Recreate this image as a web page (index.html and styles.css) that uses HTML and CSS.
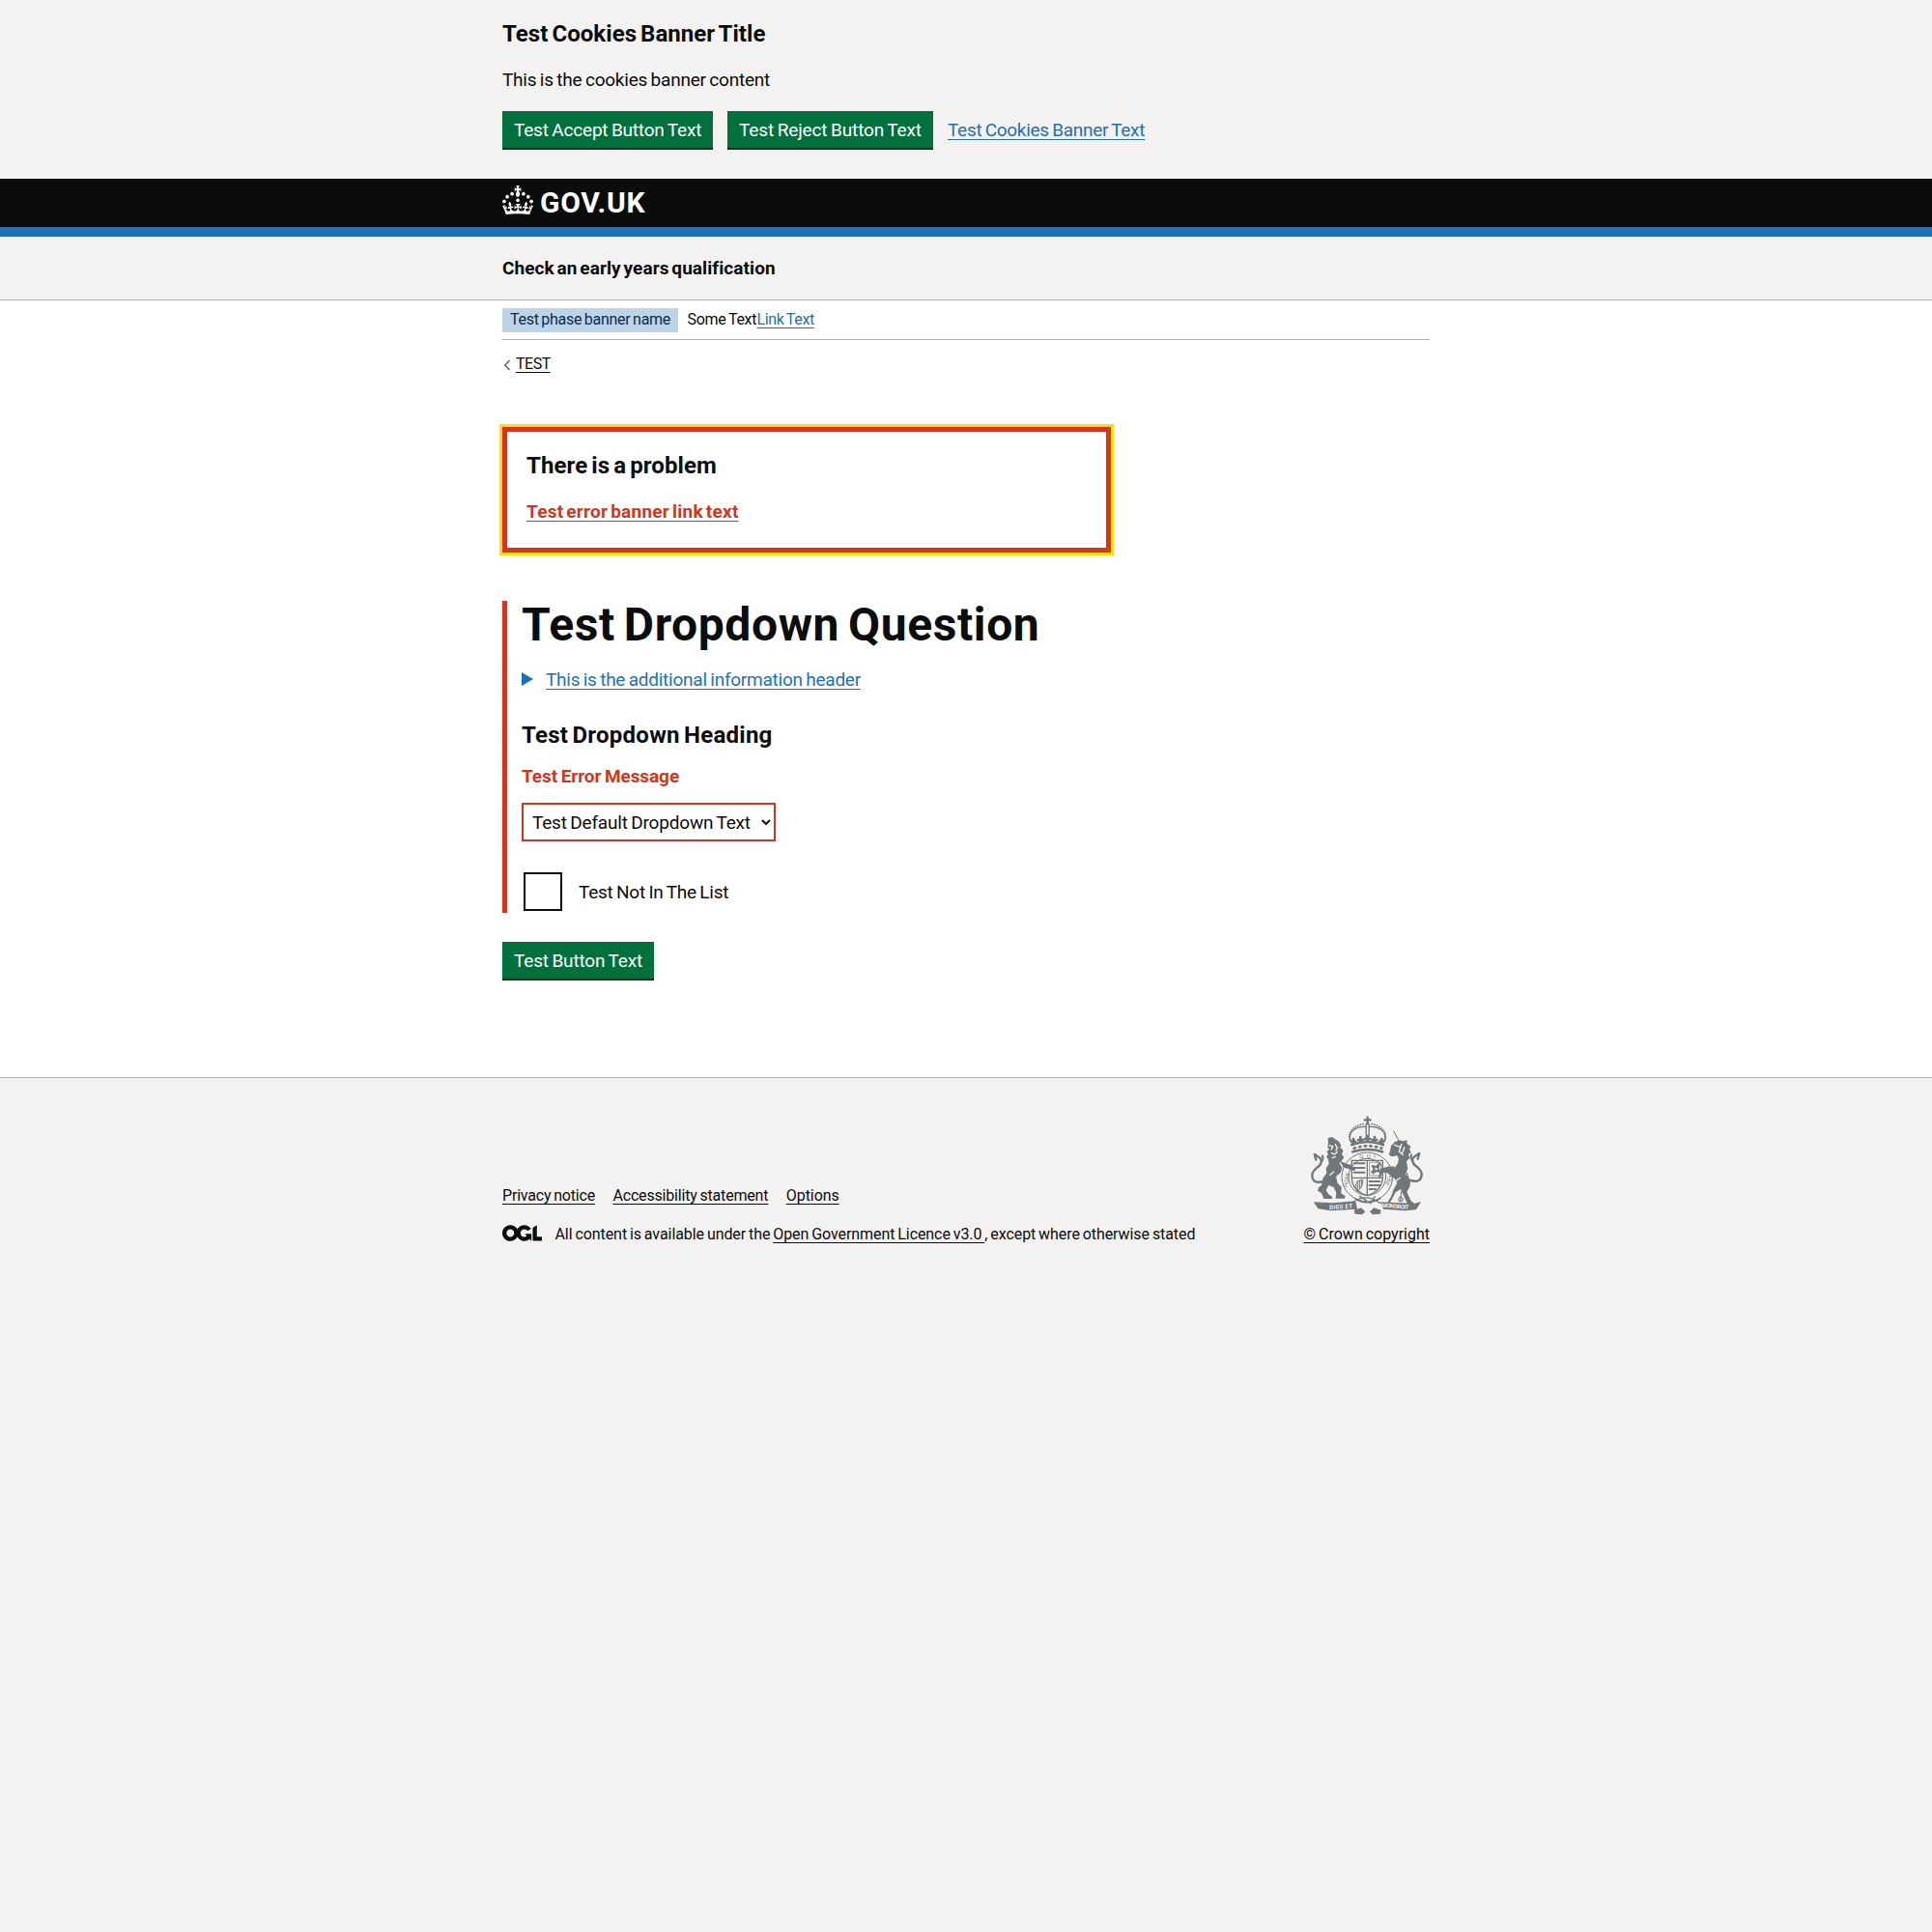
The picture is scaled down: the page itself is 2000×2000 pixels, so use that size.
FILE: index.html
```html
<!DOCTYPE html>
<html lang="en">
<head>
<meta charset="utf-8">
<title>Check an early years qualification</title>
<link rel="stylesheet" href="styles.css">
</head>
<body>
<section class="cookies">
  <div class="container">
    <h2 class="heading cookies-title">Test Cookies Banner Title</h2>
    <p class="cookies-text">This is the cookies banner content</p>
    <div class="button-group">
      <button class="button accept">Test Accept Button Text</button>
      <button class="button reject">Test Reject Button Text</button>
      <a class="link cookies-link" href="#">Test Cookies Banner Text</a>
    </div>
  </div>
</section>

<header class="header">
  <div class="container logo">
    <svg class="crown" viewBox="0 0 32 30" aria-hidden="true"><path fill="currentColor" d="M22.6 10.4c-1 .4-2-.1-2.4-1-.4-.9.1-2 1-2.4.9-.4 2 .1 2.4 1s-.1 2-1 2.4m-5.9 6.7c-.9.4-2-.1-2.4-1-.4-.9.1-2 1-2.4.9-.4 2 .1 2.4 1s-.1 2-1 2.4m10.8-3.7c-1 .4-2-.1-2.4-1-.4-.9.1-2 1-2.4.9-.4 2 .1 2.4 1s0 2-1 2.4m3.3 4.8c-1 .4-2-.1-2.4-1-.4-.9.1-2 1-2.4.9-.4 2 .1 2.4 1s-.1 2-1 2.4M17 4.7l2.3 1.2V2.5l-2.3.7-.2-.2.9-3h-3.4l.9 3-.2.2c-.1.1-2.3-.7-2.3-.7v3.4L15 4.7c.1.1.1.2.2.2l-1.3 4c-.1.2-.1.4-.1.6 0 1.1.8 2 1.9 2.2h.7c1-.2 1.9-1.1 1.9-2.1 0-.2 0-.4-.1-.6l-1.3-4c-.1-.2 0-.2.1-.3m-7.6 5.7c.9.4 2-.1 2.4-1 .4-.9-.1-2-1-2.4-.9-.4-2 .1-2.4 1s0 2 1 2.4m-5 3c.9.4 2-.1 2.4-1 .4-.9-.1-2-1-2.4-.9-.4-2 .1-2.4 1s.1 2 1 2.4m-3.2 4.8c.9.4 2-.1 2.4-1 .4-.9-.1-2-1-2.4-.9-.4-2 .1-2.4 1s0 2 1 2.4m14.8 11c4.4 0 8.6.3 12.3.8 1.1-4.5 2.4-7 3.7-8.8l-2.5-.9c.2 1.3.3 1.9 0 2.7-.4-.4-.8-1.1-1.1-2.3l-1.2 4c.7-.5 1.3-.8 2-.9-1.1 2.5-2.6 3.1-3.5 3-1.1-.2-1.7-1.2-1.5-2.1.3-1.2 1.5-1.5 2.1-.1 1.1-2.3-.8-3-2-2.3 1.9-1.9 2.1-3.5.6-5.6-2.1 1.6-2.1 3.2-1.2 5.5-1.2-1.4-3.2-.6-2.5 1.6.9-1.4 2.1-.5 1.9.8-.2 1.1-1.7 2.1-3.5 1.9-2.7-.2-2.9-2.1-2.9-3.6.7-.1 1.9.5 2.9 1.9l.4-4.3c-1.1 1.1-2.1 1.4-3.2 1.4.4-1.2 2.1-3 2.1-3h-5.4s1.7 1.9 2.1 3c-1.1 0-2.1-.2-3.2-1.4l.4 4.3c1-1.4 2.2-2 2.9-1.9-.1 1.5-.2 3.4-2.9 3.6-1.9.2-3.4-.8-3.5-1.9-.2-1.3 1-2.2 1.9-.8.7-2.3-1.2-3-2.5-1.6.9-2.2.9-3.9-1.2-5.5-1.5 2-1.3 3.7.6 5.6-1.2-.7-3.1 0-2 2.3.6-1.4 1.8-1.1 2.1.1.2.9-.3 1.9-1.5 2.1-.9.2-2.4-.5-3.5-3 .6 0 1.2.3 2 .9l-1.2-4c-.3 1.1-.7 1.9-1.1 2.3-.3-.8-.2-1.4 0-2.7l-2.9.9C1.3 23 2.6 25.5 3.7 30c3.7-.5 7.9-.8 12.3-.8"/></svg>
    <span class="wordmark">GOV.UK</span>
  </div>
</header>

<div class="service">
  <div class="container service-name">Check an early years qualification</div>
</div>

<div class="page">
  <div class="container">
    <div class="phase">
      <strong class="tag">Test phase banner name</strong>
      <span class="phase-text">Some Text</span><a class="link phase-link" href="#">Link Text</a>
    </div>
    <div class="back">
      <svg class="chevron" viewBox="0 0 8 14" aria-hidden="true"><path d="M6.5 2 1.7 7l4.800 5" fill="none" stroke="currentColor" stroke-width="1.3"/></svg>
      <a class="link dark back-link" href="#">TEST</a>
    </div>
    <main>
      <div class="error-summary">
        <h2 class="heading problem">There is a problem</h2>
        <a class="link error-link" href="#">Test error banner link text</a>
      </div>
      <div class="form-group">
        <h1 class="question">Test Dropdown Question</h1>
        <div class="details">
          <svg class="triangle" viewBox="0 0 12 14" aria-hidden="true"><path d="M0 0v14l12-7z" fill="currentColor"/></svg>
          <a class="link details-link" href="#">This is the additional information header</a>
        </div>
        <h2 class="heading dropdown-title">Test Dropdown Heading</h2>
        <p class="error-message">Test Error Message</p>
        <select class="select"><option>Test Default Dropdown Text</option></select>
        <label class="checkbox"><span class="box"></span><span class="checkbox-label">Test Not In The List</span></label>
      </div>
      <button class="button submit">Test Button Text</button>
    </main>
  </div>
</div>

<footer class="footer">
  <div class="container footer-row">
    <div>
      <nav class="footer-links">
        <a class="link dark privacy" href="#">Privacy notice</a>
        <a class="link dark accessibility" href="#">Accessibility statement</a>
        <a class="link dark options" href="#">Options</a>
      </nav>
      <div class="licence">
        <svg class="ogl" viewBox="0 0 483.2 195.7" aria-hidden="true"><path fill="currentColor" d="M421.500 142.800V.1l-50.700 32.300v161.100h112.400v-50.700zm-122.300-9.600A47.120 47.120 0 0 1 221 97.800c0-26 21.100-47.100 47.100-47.100 16.700 0 31.400 8.700 39.700 21.800l42.700-27.200A97.630 97.630 0 0 0 268.100 0c-36.500 0-68.300 20.100-85.100 49.700A98 98 0 0 0 97.800 0C43.900 0 0 43.900 0 97.800s43.900 97.800 97.800 97.800c36.500 0 68.300-20.100 85.100-49.700a97.760 97.760 0 0 0 149.600 25.400l19.400 22.200h3v-87.800h-80l24.300 27.500zM97.800 145c-26 0-47.100-21.100-47.100-47.100s21.100-47.100 47.100-47.100 47.100 21.100 47.100 47.100S123.800 145 97.800 145"/></svg>
        <span class="licence-text">All content is available under the <a class="link dark" href="#">Open Government Licence v3.0&nbsp;</a>, except where otherwise stated</span>
      </div>
    </div>
    <div class="copyright">
      <svg class="crest" viewBox="0 0 372 330" aria-hidden="true">
        <g fill="none" stroke="currentColor" stroke-linecap="round" stroke-linejoin="round">
          <!-- crown -->
          <path stroke-width="7" d="M188 14v20M179 22h18"/>
          <path stroke-width="4" d="M183 36q5-5 10 0l-1 42h-8z"/>
          <path stroke-width="4" d="M138 92c-16-30 10-50 46-49M238 92c16-30-10-50-46-49"/>
          <path stroke-width="5" stroke-dasharray="1 7" d="M133 84c-8-26 16-46 46-50M243 84c8-26-16-46-46-50"/>
          <path stroke-width="8" d="M139 99q49-18 98 0M142 121q46-14 92 0"/>
          <path stroke-width="8" stroke-dasharray="4 13" d="M146 110q42-14 86 0"/>
          <path stroke-width="8" d="M144 96v-15m-6 8h12M166 92v-17m-7 9h14M188 90v-18m-8 9h16M210 92v-17m-7 9h14M232 96v-15m-6 8h12"/>
          <!-- garter and shield -->
          <ellipse stroke-width="3" cx="187" cy="199" rx="79" ry="76"/>
          <ellipse stroke-width="3" cx="187" cy="199" rx="58" ry="57"/>
          <path stroke-width="4" d="M139 148h96v52q0 40-48 57-48-17-48-57zM187 148v108M139 202h96"/>
          <path stroke-width="6" stroke-dasharray="9 5 5 4" d="M146 157h35M146 171h35M146 185h35M194 213h34M194 225h32M194 237h23"/>
          <path stroke-width="6" d="M202 184l7-10-6-9 12 3 9-9-4 13 5 10-12-2-7 7"/>
          <path stroke-width="2" d="M195 154h34v41h-34z"/>
          <path stroke-width="3" d="M151 229q-1-20 23-21-1 25-17 36zM157 213v27M163 211v25M169 210v20"/>
          <path stroke-width="4" d="M149 266q36 25 79 0M145 276q40-27 83 5M164 259l21 14M211 260l-14 22"/>
          <!-- tails -->
          <path stroke-width="7" d="M52 213q-35 9-36-18c-1-24 34-27 28-49-3-9-13-10-21-17l5 17"/>
          <path stroke-width="6" d="M45 151q7-7 3-18"/>
          <path stroke-width="7" d="M321 210q34 9 35-18c1-24-34-27-28-49 3-9 13-10 21-17l-5 17"/>
          <path stroke-width="6" d="M327 148q-7-7-3-18"/>
          <!-- horn and chain -->
          <path stroke-width="3" d="M287 91 269 57"/>
          <path stroke-width="4" stroke-dasharray="7 4" d="M302 177c17 20 17 35 2 52-15 16-12 28-14 44"/>
          <circle stroke-width="3" cx="291" cy="269" r="7"/>
        </g>
        <g fill="currentColor">
          <!-- lion -->
          <path d="M66 91q-1-8 10-7 12-4 23 5l7 12-3 6 10 10-5 11 7 11-9 12 17 7 14 4 15 11-5 7-15-5-22-6-6 17-14 12 5 20 12 12-1 20 13 9-2 7H89l2-18-9-18-15-5-8 15 8 13 12 8-2 6H52l-7-18-12-7 3-10 9-7 4-21 12-17-2-15 9-13-2-14-6-9 6-7-5-9 8-5-5-10z"/>
          <!-- unicorn -->
          <path d="m261 103 12-13 15-5 10 3 13-3-1 10 13 10-5 7 5 12-8 4 4 12-10 11 4 22-7 17 15 19-1 19-10 17 13 29 8 5-3 8h-15l-7-17-8-18-7-15-16 10-9 17-11 20 1 11-10-2 3-13 12-20 7-20 12-22-8-14-23-17-14-2-8 18-5-1 6-28 22-7 26-1 9-20-4-13-18 3-9-6 3-7z"/>
          <!-- scrolls and base -->
          <path d="M20 277l60 3 71-6 5 25-82 5-39-6zM229 277l57 3 49 1 19-5-15 25-35 3-67-5zM146 302l22-7 13 12-9 9-23-2zM230 302l-22-7-13 12 9 9 23-2z"/>
          <path d="M64 80q12-7 24 1v6H66z"/>
        </g>
        <g class="crest-cuts" fill="none" stroke-width="4">
          <path d="m68 101 12 4-5 10M87 96l7 13-5 9M75 124l11 5 9-9M77 139l13-2M270 99l20 8M294 96l-8 24 13 11M303 105l-7 20M84 182l-14 12M282 153l-12 16M290 201l-16 12M102 154l9 16"/>
        </g>
        <circle cx="76" cy="78" r="3" fill="currentColor"/>
        <g class="motto-dark"><text x="163" y="142" textLength="49">QUI</text><text x="108" y="229" transform="rotate(-79 118 220)" textLength="44">HONI</text><text x="244" y="228" transform="rotate(-67 248 218)" textLength="58">PENSE</text></g>
        <g class="motto-light"><text x="69" y="298" transform="rotate(-4 100 290)" textLength="72">DIEU ET</text><text x="232" y="296" transform="rotate(4 270 290)" textLength="84">MON DROIT</text></g>
      </svg>
      <a class="link dark crown-link" href="#">© Crown copyright</a>
    </div>
  </div>
</footer>
</body>
</html>
```
FILE: styles.css
```css
* { box-sizing: border-box; }
html { background: #f3f2f1; }
body {
  margin: 0;
  color: #0b0c0c;
  font: 400 19px/25px Roboto, "Liberation Sans", sans-serif;
  word-spacing: -1px;
}
h1, h2, p { margin: 0; }
.container { width: 960px; margin: 0 auto; }
.heading { font-size: 24px; line-height: 30px; font-weight: 700; word-spacing: -2px; }
.link {
  color: #1d70b8;
  text-decoration: underline;
  text-decoration-thickness: 1px;
  text-underline-offset: 3px;
  text-decoration-skip-ink: none;
}
.link.dark { color: #0b0c0c; }

/* Cookie banner */
.cookies { height: 185px; padding-top: 20px; }
.cookies-title { margin-bottom: 20px; letter-spacing: .05px; }
.cookies-text { margin-bottom: 20px; letter-spacing: -.22px; }
.button-group { display: flex; gap: 15px; }
.cookies-link { line-height: 19px; padding-top: 10px; letter-spacing: -.3px; }
.button {
  display: block;
  height: 38px;
  padding: 8px 10px 7px;
  border: 2px solid transparent;
  background: #00703c;
  box-shadow: 0 2px 0 #002d18;
  color: #fff;
  font: inherit;
  line-height: 19px;
  white-space: nowrap;
  word-spacing: -1px;
}
.accept { width: 218px; letter-spacing: -.19px; }
.reject { width: 213px; letter-spacing: -.13px; }
.submit { width: 157px; letter-spacing: -.17px; }

/* Header */
.header { height: 60px; background: #0b0c0c; border-bottom: 10px solid #1d70b8; color: #fff; }
.logo { display: flex; align-items: flex-start; padding-top: 7px; gap: 7px; }
.crown { width: 32px; height: 30px; }
.wordmark { font-size: 30px; line-height: 35px; font-weight: 700; letter-spacing: .75px; }
.service { padding: 20px 0; border-bottom: 1px solid #b1b4b6; }
.service-name { font-weight: 700; letter-spacing: .08px; word-spacing: -2px; }

/* Page */
.page { height: 804px; background: #fff; padding-top: 8px; }
.phase {
  display: flex;
  height: 33px;
  border-bottom: 1px solid #b1b4b6;
  font-size: 16px;
  line-height: 20px;
}
.tag {
  width: 182px;
  height: 25px;
  padding: 2px 8px 3px;
  margin-right: 9.500px;
  background: #bbd4ea;
  color: #0c2d4a;
  font-weight: 400;
  white-space: nowrap;
  letter-spacing: -.28px;
}
.phase-text { padding-top: 2px; width: 72px; letter-spacing: -.28px; white-space: nowrap; }
.phase-link { padding-top: 2px; letter-spacing: -.35px; }
.back { display: flex; align-items: center; gap: 5px; margin-top: 15px; padding-left: 1px; font-size: 16px; line-height: 20px; }
.chevron { width: 8px; height: 14px; color: #505a5f; margin-top: 1px; }
.back-link { letter-spacing: -.5px; }
.error-summary {
  width: 630px;
  height: 130px;
  margin-top: 55px;
  padding: 20px;
  border: 5px solid #d4351c;
  outline: 3px solid #fd0;
}
.problem { margin-bottom: 20px; letter-spacing: .09px; }
.error-link { color: #d4351c; font-weight: 700; letter-spacing: .25px; word-spacing: -2px; }
.form-group {
  height: 323px;
  margin-top: 50px;
  padding-left: 15px;
  border-left: 5px solid #d4351c;
}
.question { font-size: 48px; line-height: 50px; letter-spacing: .6px; word-spacing: -3.500px; }
.details { display: flex; align-items: center; gap: 13px; margin-top: 19px; }
.triangle { width: 12px; height: 14px; margin-bottom: 1px; color: #1d70b8; }
.details-link { letter-spacing: -.24px; }
.dropdown-title { margin-top: 30px; letter-spacing: .26px; }
.error-message { margin-top: 15px; color: #d4351c; font-weight: 700; letter-spacing: -.08px; }
.select {
  display: block;
  width: 263px;
  height: 40px;
  margin-top: 15px;
  padding: 5px 4px 5px 5px;
  border: 2px solid #d4351c;
  background: #fff;
  color: #0b0c0c;
  font: inherit;
  letter-spacing: -.19px;
  word-spacing: -1px;
}
.checkbox { display: flex; align-items: center; gap: 17px; height: 44px; margin-top: 30px; padding-left: 2px; }
.box { width: 40px; height: 40px; border: 2px solid #0b0c0c; }
.checkbox-label { letter-spacing: -.24px; }
.submit { margin-top: 30px; }

/* Footer */
.footer { padding-top: 40px; border-top: 1px solid #b1b4b6; font-size: 16px; line-height: 20px; }
.footer-row { display: flex; justify-content: space-between; align-items: flex-end; }
.footer-links { display: flex; gap: 18.500px; margin-bottom: 20px; }
.privacy { letter-spacing: -.19px; }
.accessibility { letter-spacing: -.18px; }
.options { letter-spacing: -.08px; }
.licence { display: flex; }
.ogl { width: 41px; height: 17px; margin: 0 13.500px 0 0; }
.licence-text { letter-spacing: -.07px; white-space: nowrap; }
.copyright { display: flex; flex-direction: column; align-items: flex-end; }
.crest { width: 124px; height: 110px; margin: -4px 3px 6px 0; color: #6f777b; }
.crown-link { letter-spacing: 0; }
.crest-cuts { stroke: #f3f2f1; }
.motto-dark { fill: #6f777b; font-size: 18px; }
.motto-light { fill: #f3f2f1; font-size: 18px; font-weight: 700; }
```
